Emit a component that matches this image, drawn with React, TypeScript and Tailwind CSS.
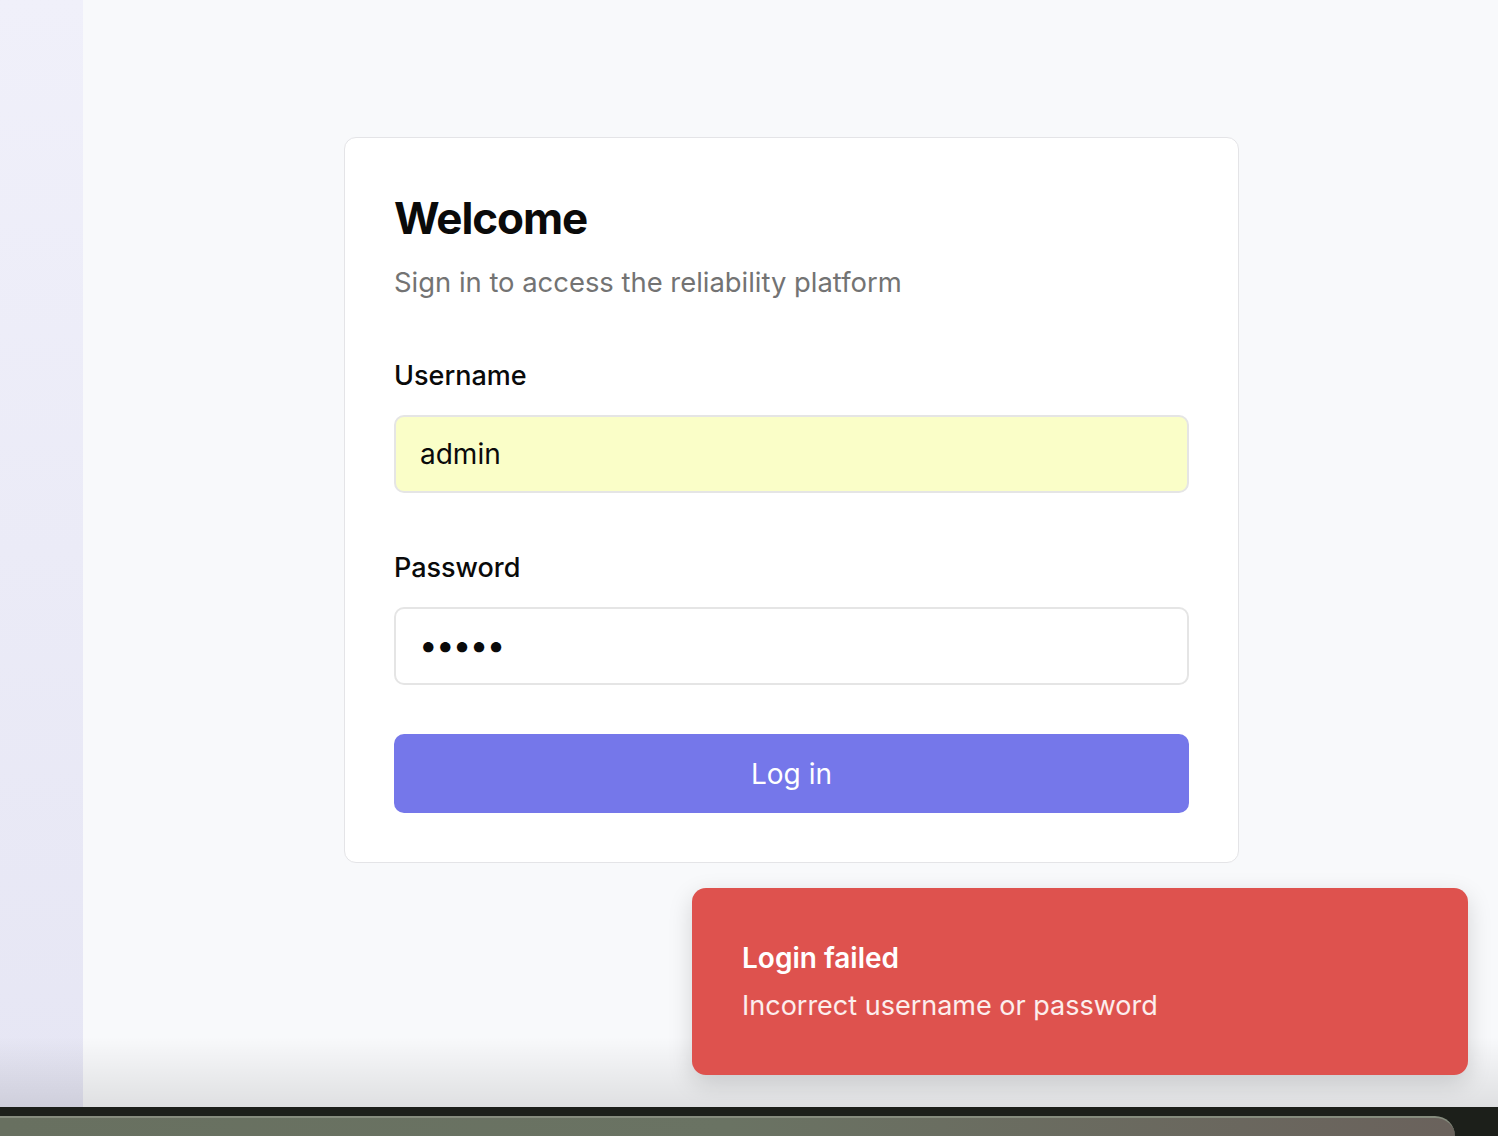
import React from 'react';

const App: React.FC = () => {
  return (
    <div className="relative h-[1136px] w-[1498px] overflow-hidden bg-[#1c1f1a] font-['Inter',_'Noto_Sans',_sans-serif]">
      <div className="relative flex h-[1107px]">
        <aside className="w-[83px] shrink-0 bg-gradient-to-b from-[#f0f0fa] to-[#e6e6f4]" />
        <main className="flex flex-1 items-start bg-[#f8f9fb] pl-[261px] pt-[137px]">
          <div className="h-[726px] w-[895px] rounded-[12px] border border-[#e4e4e7] bg-white px-[49px] pt-[52px]">
            <h1 className="text-[44px] font-bold leading-[56px] tracking-[-0.025em] text-[#0a0a0a]">Welcome</h1>
            <p className="mt-[18px] text-[27.4px] leading-[36px] text-[#737373]">Sign in to access the reliability platform</p>

            <label className="mt-[58px] block text-[27px] font-medium leading-[36px] text-[#0a0a0a]">Username</label>
            <input
              type="text"
              defaultValue="admin"
              className="mt-[21px] block h-[78px] w-full rounded-[10px] border-2 border-[#e5e5e5] bg-[#fafec8] px-[24px] text-[28px] text-[#0a0a0a] outline-none"
            />

            <label className="mt-[57px] block text-[27px] font-medium leading-[36px] text-[#0a0a0a]">Password</label>
            <input
              type="password"
              defaultValue="admin"
              className="mt-[21px] block h-[78px] w-full rounded-[10px] border-2 border-[#e5e5e5] bg-white px-[23px] pb-[3px] text-[33px] tracking-[-0.05em] text-[#0a0a0a] outline-none"
            />

            <button className="mt-[49px] block h-[79px] w-full rounded-[10px] bg-[#7577ea] text-[28px] text-white">
              Log in
            </button>
          </div>
        </main>

        {/* bottom shade from the window edge */}
        <div className="pointer-events-none absolute inset-x-0 bottom-0 h-[70px] bg-gradient-to-b from-transparent to-[rgba(0,0,0,0.1)]" />

        {/* toast */}
        <div className="absolute bottom-[32px] right-[30px] flex h-[187px] w-[776px] flex-col justify-center rounded-[14px] bg-[#de524e] pl-[50px] shadow-[0_8px_24px_rgba(0,0,0,0.15)]">
          <div className="text-[28px] font-semibold leading-[36px] text-white">Login failed</div>
          <div className="mt-[12px] text-[27px] leading-[36px] text-white/90">Incorrect username or password</div>
        </div>
      </div>

      {/* desktop dock peeking in */}
      <div className="absolute bottom-0 left-0 h-[20px] w-[1455px] rounded-tr-[30px] border-t-2 border-[#868c7e] bg-gradient-to-r from-[#687060] via-[#6a7363] to-[#6a625c]" />
    </div>
  );
};

export default App;
